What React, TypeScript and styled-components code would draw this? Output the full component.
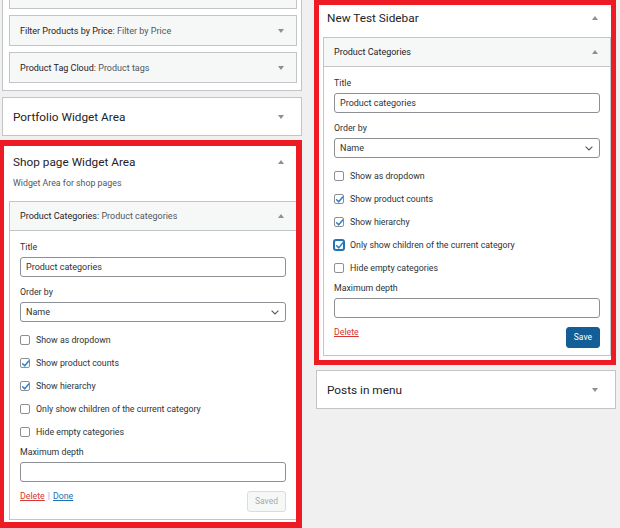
import React from "react";
import styled, { createGlobalStyle, css } from "styled-components";

const GlobalStyle = createGlobalStyle`
  html, body {
    margin: 0;
    padding: 0;
    background: #f0f0f1;
  }
  body {
    font-family: Roboto, "Noto Sans", sans-serif;
    color: #1d2327;
    overflow: hidden;
  }
  * { box-sizing: border-box; }
`;

const Page = styled.div`
  display: flex;
  align-items: flex-start;
  gap: 14px;
  padding-left: 2px;
  width: 620px;
  height: 528px;
  overflow: hidden;
`;

const Column = styled.div<{ $offset?: number }>`
  width: 300px;
  flex: none;
  display: flex;
  flex-direction: column;
  gap: 6px;
  margin-top: ${(p) => p.$offset ?? 0}px;
`;

/* A widget area (sidebar) holder */
const Holder = styled.section<{ $cut?: boolean }>`
  position: relative;
  background: #fff;
  border: 1px solid #c3c4c7;
  ${(p) =>
    p.$cut &&
    css`
      border-top: none;
    `}
`;

const SidebarName = styled.div<{ $open?: boolean }>`
  display: flex;
  align-items: center;
  justify-content: space-between;
  padding: ${(p) => (p.$open ? "11px 17px 0 10px" : "11px 17px 10px 10px")};
`;

const SidebarTitle = styled.h2`
  margin: 0;
  font-size: 11.8px;
  line-height: 16px;
  font-weight: 400;
  color: #1d2327;
`;

const SidebarDescription = styled.p`
  margin: 6px 0 0;
  padding: 0 10px;
  font-size: 8.8px;
  line-height: 14px;
  color: #50575e;
`;

const WidgetList = styled.div<{ $flush?: boolean }>`
  display: flex;
  flex-direction: column;
  gap: 6px;
  padding: ${(p) => (p.$flush ? "0" : "11px")} 4px 7px 6px;
`;

const Toggle = styled.span<{ $open?: boolean }>`
  flex: none;
  width: 0;
  height: 0;
  border-left: 3px solid transparent;
  border-right: 3px solid transparent;
  ${(p) =>
    p.$open
      ? css`
          border-bottom: 4px solid #8c8f94;
        `
      : css`
          border-top: 4px solid #8c8f94;
        `}
`;

/* A single widget inside an area */
const Widget = styled.div<{ $cut?: boolean; $stub?: number }>`
  background: #fff;
  border: 1px solid #c3c4c7;
  ${(p) =>
    p.$cut &&
    css`
      border-top: none;
    `}
  ${(p) =>
    p.$stub &&
    css`
      height: ${p.$stub}px;
      background: #f6f7f7;
    `}
`;

const WidgetTop = styled.div<{ $open?: boolean }>`
  height: 29px;
  display: flex;
  align-items: center;
  justify-content: space-between;
  padding: 0 12px 0 10px;
  background: #f6f7f7;
  ${(p) =>
    p.$open &&
    css`
      border-bottom: 1px solid #c3c4c7;
    `}
`;

const WidgetTitle = styled.h3`
  margin: 0;
  font-size: 9px;
  line-height: 14px;
  font-weight: 400;
  color: #1d2327;
  white-space: nowrap;
`;

const InTitle = styled.span`
  color: #50575e;
`;

const Form = styled.div`
  display: flex;
  flex-direction: column;
  padding: 9px 10px 7px;
`;

const Label = styled.div<{ $gap?: number }>`
  margin-top: ${(p) => p.$gap ?? 0}px;
  font-size: 8.8px;
  line-height: 14px;
  color: #2c3338;
`;

const Field = styled.div`
  display: flex;
  align-items: center;
  justify-content: space-between;
  height: 20px;
  margin-top: 3px;
  padding: 0 6px 0 5px;
  border: 1px solid #8c8f94;
  border-radius: 3px;
  background: #fff;
  font-size: 9px;
  color: #2c3338;
`;

const Checks = styled.div`
  display: flex;
  flex-direction: column;
  margin-top: 6px;
`;

const CheckRow = styled.div`
  display: flex;
  align-items: center;
  gap: 6px;
  height: 23px;
  font-size: 8.8px;
  color: #2c3338;
`;

const Box = styled.span<{ $focus?: boolean }>`
  flex: none;
  display: grid;
  place-items: center;
  width: 10px;
  height: 10px;
  border: 1px solid #8c8f94;
  border-radius: 2px;
  background: #fff;
  ${(p) =>
    p.$focus &&
    css`
      border-color: #2271b1;
      box-shadow: 0 0 0 1px #2271b1;
    `}
`;

const Footer = styled.div`
  display: flex;
  align-items: flex-start;
  justify-content: space-between;
  margin-top: 7px;
`;

const Links = styled.div`
  font-size: 8.8px;
  line-height: 14px;
  color: #72aee6;
`;

const Link = styled.a<{ $danger?: boolean }>`
  color: ${(p) => (p.$danger ? "#d63638" : "#2271b1")};
  text-decoration: underline;
`;

const Sep = styled.span`
  margin: 0 3px;
`;

const Button = styled.button<{ $primary?: boolean }>`
  margin-top: 2px;
  height: 21px;
  padding: 0 7px;
  border-radius: 3px;
  font-family: inherit;
  font-size: 8.5px;
  line-height: 19px;
  ${(p) =>
    p.$primary
      ? css`
          background: #135e96;
          border: 1px solid #135e96;
          color: #fff;
        `
      : css`
          background: #f6f7f7;
          border: 1px solid #dcdcde;
          color: #a7aaad;
        `}
`;

/* Red marker frame drawn over an area */
const Highlight = styled.span<{
  $t: number;
  $r: number;
  $b: number;
  $l: number;
  $w: number;
}>`
  position: absolute;
  top: ${(p) => p.$t}px;
  right: ${(p) => p.$r}px;
  bottom: ${(p) => p.$b}px;
  left: ${(p) => p.$l}px;
  border: ${(p) => p.$w}px solid #ed1c24;
  pointer-events: none;
`;

const Check = () => (
  <svg width="9" height="9" viewBox="0 0 10 10" aria-hidden>
    <path
      d="M1.8 5.3 L4.2 7.6 L8.6 2.2"
      fill="none"
      stroke="#3582c4"
      strokeWidth="1.7"
      strokeLinecap="round"
      strokeLinejoin="round"
    />
  </svg>
);

const Chevron = () => (
  <svg width="8" height="5" viewBox="0 0 8 5" aria-hidden>
    <path d="M0.6 0.6 L4 4 L7.4 0.6" fill="none" stroke="#50575e" strokeWidth="1.1" />
  </svg>
);

type Opt = { label: string; checked?: boolean; focus?: boolean };

const CategoryForm = ({
  options,
  done,
  primary,
}: {
  options: Opt[];
  done?: boolean;
  primary?: boolean;
}) => (
  <Form>
    <Label>Title</Label>
    <Field>Product categories</Field>
    <Label $gap={8}>Order by</Label>
    <Field>
      Name
      <Chevron />
    </Field>
    <Checks>
      {options.map((o) => (
        <CheckRow key={o.label}>
          <Box $focus={o.focus}>{o.checked && <Check />}</Box>
          {o.label}
        </CheckRow>
      ))}
    </Checks>
    <Label $gap={2}>Maximum depth</Label>
    <Field />
    <Footer>
      <Links>
        <Link $danger>Delete</Link>
        {done && (
          <>
            <Sep>|</Sep>
            <Link>Done</Link>
          </>
        )}
      </Links>
      <Button $primary={primary}>{primary ? "Save" : "Saved"}</Button>
    </Footer>
  </Form>
);

const shopOptions: Opt[] = [
  { label: "Show as dropdown" },
  { label: "Show product counts", checked: true },
  { label: "Show hierarchy", checked: true },
  { label: "Only show children of the current category" },
  { label: "Hide empty categories" },
];

const sidebarOptions: Opt[] = [
  { label: "Show as dropdown" },
  { label: "Show product counts", checked: true },
  { label: "Show hierarchy", checked: true },
  { label: "Only show children of the current category", checked: true, focus: true },
  { label: "Hide empty categories" },
];

const CollapsedWidget = ({ name, title }: { name: string; title: string }) => (
  <Widget>
    <WidgetTop>
      <WidgetTitle>
        {name}: <InTitle>{title}</InTitle>
      </WidgetTitle>
      <Toggle />
    </WidgetTop>
  </Widget>
);

const CollapsedArea = ({ name }: { name: string }) => (
  <Holder>
    <SidebarName>
      <SidebarTitle>{name}</SidebarTitle>
      <Toggle />
    </SidebarName>
  </Holder>
);

export default function App() {
  return (
    <>
      <GlobalStyle />
      <Page>
        <Column>
          <Holder $cut>
            <WidgetList $flush>
              <Widget $cut $stub={9} />
              <CollapsedWidget name="Filter Products by Price" title="Filter by Price" />
              <CollapsedWidget name="Product Tag Cloud" title="Product tags" />
            </WidgetList>
          </Holder>
          <CollapsedArea name="Portfolio Widget Area" />
          <Holder>
            <SidebarName $open>
              <SidebarTitle>Shop page Widget Area</SidebarTitle>
              <Toggle $open />
            </SidebarName>
            <SidebarDescription>Widget Area for shop pages</SidebarDescription>
            <WidgetList>
              <Widget>
                <WidgetTop $open>
                  <WidgetTitle>
                    Product Categories: <InTitle>Product categories</InTitle>
                  </WidgetTitle>
                  <Toggle $open />
                </WidgetTop>
                <CategoryForm options={shopOptions} done />
              </Widget>
            </WidgetList>
            <Highlight $t={-3} $r={-1} $b={-1} $l={-5} $w={6} />
          </Holder>
        </Column>
        <Column $offset={-2}>
          <Holder>
            <SidebarName $open>
              <SidebarTitle>New Test Sidebar</SidebarTitle>
              <Toggle $open />
            </SidebarName>
            <WidgetList>
              <Widget>
                <WidgetTop $open>
                  <WidgetTitle>Product Categories</WidgetTitle>
                  <Toggle $open />
                </WidgetTop>
                <CategoryForm options={sidebarOptions} primary />
              </Widget>
            </WidgetList>
            <Highlight $t={1} $r={-1} $b={-2} $l={-3} $w={5} />
          </Holder>
          <CollapsedArea name="Posts in menu" />
        </Column>
      </Page>
    </>
  );
}
